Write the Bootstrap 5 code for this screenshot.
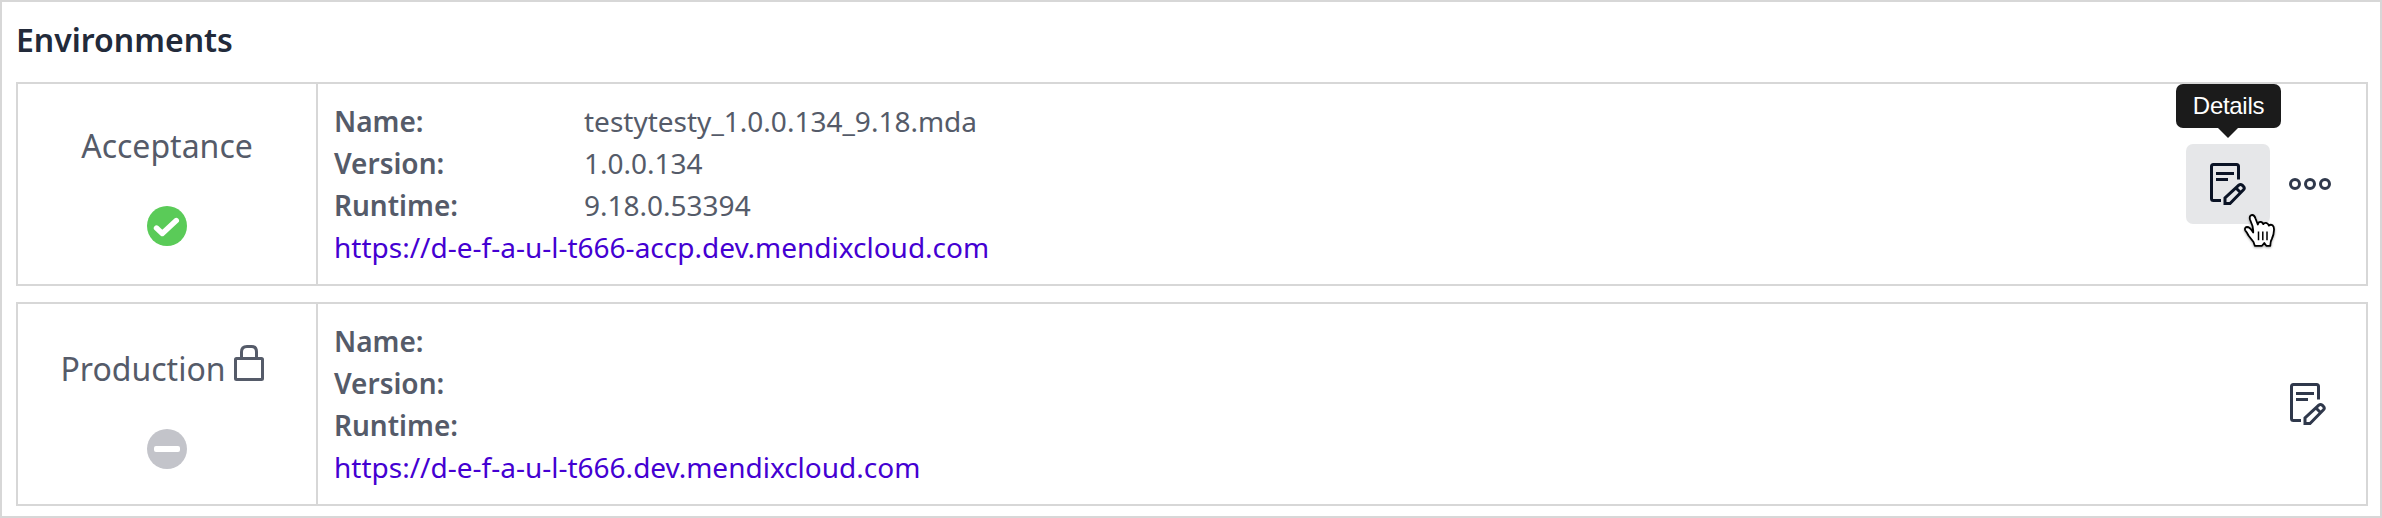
<!DOCTYPE html>
<html lang="en">
<head>
<meta charset="utf-8">
<title>Environments</title>
<link href="https://cdn.jsdelivr.net/npm/bootstrap@5.3.0/dist/css/bootstrap.min.css" rel="stylesheet">
<style>
body{font-family:"Noto Sans",sans-serif;color:#555b69;background:#fff;font-size:28px;line-height:42px}
.env-panel{height:518px;border:2px solid #d7d7d7;padding:0 12px 0 14px}
.env-title{font-size:32px;line-height:43px;font-weight:600;color:#222a3a;padding:16px 0 21px}
.env-card{height:204px;border:2px solid #d7d7d7;border-radius:0}
.env-card + .env-card{margin-top:16px}
.env-status{width:300px;border-right:2px solid #d7d7d7;padding-top:39px}
.env-name{font-size:32px;line-height:45px}
.env-badge{margin-top:38px}
.locked .env-status{padding-top:41px}
.locked .env-name{padding-top:1px}
.env-lock{margin-right:10px}
.env-info{padding:16px}
.env-label{width:250px;font-weight:600}
.env-link,.env-link:hover{color:#4400d2;text-decoration:none}
.env-actions{padding-right:35px}
.locked .env-actions{padding-right:40px}
.env-btn{width:84px;height:80px;border-radius:7px;border:0;padding:0;color:#0a1325;background:#e6e7e9}
.env-ico{color:#2f384b}
.env-dots{margin-left:19px}
.env-tip{top:-60px;left:-10px;width:105px;height:44px;border-radius:7px;background:#1b1b1b;color:#fff;font:24px/43px "Liberation Sans",Arial,sans-serif;letter-spacing:-.3px;text-align:center}
.env-tip::after{content:"";position:absolute;left:42px;top:44px;border:10px solid transparent;border-top-color:#1b1b1b;border-bottom:0}
.env-cursor{left:57px;top:68px;filter:drop-shadow(0 1px 1px rgba(0,0,0,.35))}
svg{display:block}
</style>
</head>
<body>
<svg width="0" height="0" class="position-absolute" aria-hidden="true">
  <symbol id="edit" viewBox="0 0 36 42">
    <g fill="none" stroke="currentColor" stroke-width="3">
      <path d="M11 37.500H3.500Q1.500 37.500 1.500 35.500V3.500Q1.500 1.500 3.500 1.500H26.500Q28.500 1.500 28.500 3.500V16.500M6 10.500H24M6 16.500H18"/>
      <path d="M15 40.500V35L28.800 22.200Q30.500 20.700 32.200 22.200L33.500 23.500Q35 25.200 33.500 26.800L20 40.500ZM26 25L30.500 29.500"/>
    </g>
  </symbol>
</svg>
<main class="env-panel">
  <h1 class="env-title m-0">Environments</h1>
  <section class="env-card d-flex">
    <div class="env-status d-flex flex-column align-items-center flex-shrink-0">
      <div class="env-name">Acceptance</div>
      <svg class="env-badge" width="40" height="40" viewBox="0 0 40 40"><circle cx="20" cy="20" r="20" fill="#5acb58"/><path d="M9.500 22L15.300 27.500L29.300 14.500" fill="none" stroke="#fff" stroke-width="5.400" stroke-linecap="round" stroke-linejoin="round"/></svg>
    </div>
    <div class="env-info flex-grow-1">
      <div class="d-flex"><div class="env-label">Name:</div><div>testytesty_1.0.0.134_9.18.mda</div></div>
      <div class="d-flex"><div class="env-label">Version:</div><div>1.0.0.134</div></div>
      <div class="d-flex"><div class="env-label">Runtime:</div><div>9.18.0.53394</div></div>
      <a class="env-link" href="#">https://d-e-f-a-u-l-t666-accp.dev.mendixcloud.com</a>
    </div>
    <div class="env-actions d-flex align-items-center">
      <div class="position-relative">
        <button class="env-btn d-flex align-items-center justify-content-center" aria-label="Details"><svg width="36" height="42"><use href="#edit"/></svg></button>
        <div class="env-tip position-absolute">Details</div>
        <svg class="env-cursor position-absolute" width="34" height="40" viewBox="0 0 34 40"><path d="M10.200 18.500L9.500 14L7 7.500Q6 3.500 9 3Q11.300 2.800 12.500 6.500L14.800 12.500Q15.500 9.500 18 10Q19.900 10.400 20.300 12.200Q21.500 10.200 23.900 11.200Q25.500 12 25.900 13.700Q27.500 12 29.500 13.300Q31.200 14.700 31 18Q30.800 23 29 26.500Q27.200 29.500 27.300 33.800H23.300L21.300 31L19 33.800H11.800L10.500 30L5.500 23.500Q3.800 20 2.200 18.300Q1.200 15.500 4 15Q7 15 10.200 20.500Z" fill="#fff" stroke="#000" stroke-width="1.800" stroke-linejoin="round"/><path d="M15.500 19.500V28.300M19.800 19.500V28.300M24 19.500V28.300" stroke="#000" stroke-width="1.500"/></svg>
      </div>
      <svg class="env-ico env-dots" width="42" height="12" viewBox="0 0 42 12" fill="none" stroke="currentColor" stroke-width="3"><circle cx="6" cy="6" r="4.500"/><circle cx="21" cy="6" r="4.500"/><circle cx="36" cy="6" r="4.500"/></svg>
    </div>
  </section>
  <section class="env-card locked d-flex">
    <div class="env-status d-flex flex-column align-items-center flex-shrink-0">
      <div class="d-flex align-items-start"><div class="env-name">Production</div>
        <svg class="env-lock ms-2" width="30" height="36" viewBox="0 0 30 36" fill="none" stroke="currentColor" stroke-width="3"><rect x="1.500" y="13.500" width="27" height="21" rx="1"/><path d="M7.500 13V7Q7.500 1.500 13 1.500H17.500Q22.500 1.500 22.500 7V13"/></svg></div>
      <svg class="env-badge" width="40" height="40" viewBox="0 0 40 40"><circle cx="20" cy="20" r="20" fill="#c3c4ca"/><rect x="7" y="17" width="26" height="6" rx="2" fill="#fff"/></svg>
    </div>
    <div class="env-info flex-grow-1">
      <div class="env-label">Name:</div>
      <div class="env-label">Version:</div>
      <div class="env-label">Runtime:</div>
      <a class="env-link" href="#">https://d-e-f-a-u-l-t666.dev.mendixcloud.com</a>
    </div>
    <div class="env-actions d-flex align-items-center"><svg class="env-ico" width="36" height="42"><use href="#edit"/></svg></div>
  </section>
</main>
<script src="https://cdn.jsdelivr.net/npm/bootstrap@5.3.0/dist/js/bootstrap.bundle.min.js"></script>
</body>
</html>
